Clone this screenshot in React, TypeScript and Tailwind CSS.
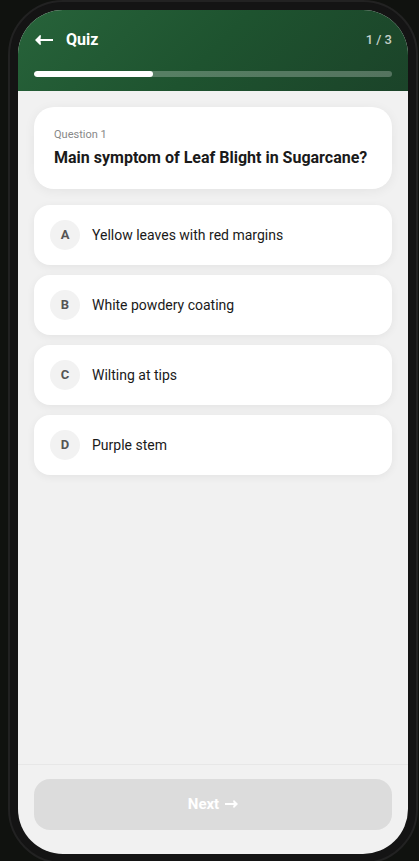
import { useState } from "react";
import { clsx } from "clsx";

interface Question {
  text: string;
  options: string[];
}

const questions: Question[] = [
  {
    text: "Main symptom of Leaf Blight in Sugarcane?",
    options: [
      "Yellow leaves with red margins",
      "White powdery coating",
      "Wilting at tips",
      "Purple stem"
    ]
  }
];

const TOTAL = 3;
const LETTERS = ["A", "B", "C", "D"];

/** Long thin arrow with a filled head */
function BackArrow() {
  return (
    <svg width="18" height="12" viewBox="0 0 18 12" fill="none" aria-hidden="true">
      <path d="M3 6H18" stroke="currentColor" strokeWidth="2" />
      <path d="M0 6L5 1L6 1.6L5.4 6L6 10.4L5 11Z" fill="currentColor" />
    </svg>
  );
}

function NextArrow() {
  return (
    <svg width="13" height="12" viewBox="0 0 13 12" fill="none" aria-hidden="true">
      <path d="M0 5H11" stroke="currentColor" strokeWidth="2" />
      <path d="M13 5L9 1L8 2L9.2 5L8 8L9 9Z" fill="currentColor" />
    </svg>
  );
}

function QuizHeader({ current }: { current: number }) {
  return (
    <header className="bg-linear-135 from-[#27633a] via-[#1e532f] to-[#1b4329] px-4 pt-4 pb-[14px] text-white">
      <div className="flex h-7 items-center">
        <button type="button" aria-label="Back" className="flex w-5 justify-center">
          <BackArrow />
        </button>
        <h1 className="ml-3 text-base font-bold">Quiz</h1>
        <span className="ml-auto text-[13px] font-medium text-white/75">
          {current} / {TOTAL}
        </span>
      </div>
      <div className="mt-[17px] h-1.5 overflow-hidden rounded-full bg-white/25">
        <div
          className="h-full rounded-full bg-white"
          style={{ width: `${(current / TOTAL) * 100}%` }}
        />
      </div>
    </header>
  );
}

interface OptionButtonProps {
  letter: string;
  label: string;
  selected: boolean;
  onSelect: () => void;
}

function OptionButton({ letter, label, selected, onSelect }: OptionButtonProps) {
  return (
    <button
      type="button"
      onClick={onSelect}
      aria-pressed={selected}
      className={clsx(
        "flex w-full items-center gap-3 rounded-2xl px-4 py-[15px] text-left shadow-[0_2px_8px_rgba(0,0,0,0.06)]",
        selected ? "bg-green-50" : "bg-white"
      )}
    >
      <span className="flex size-[30px] shrink-0 items-center justify-center rounded-full bg-[#f2f2f2] text-[13px] font-bold text-[#555555]">
        {letter}
      </span>
      <span className="text-sm text-[#1a1a1a]">{label}</span>
    </button>
  );
}

export default function App() {
  const [selected, setSelected] = useState<number | null>(null);
  const question = questions[0];

  return (
    <div className="h-screen overflow-hidden bg-[#10120f] pr-px pl-2 font-[Roboto,sans-serif]">
      {/* Phone frame */}
      <div className="h-[calc(100%+3px)] rounded-[55px] border-2 border-[#222222] bg-[#141414] p-2">
        <div className="flex h-full flex-col overflow-hidden rounded-[45px] bg-[#f1f1f1]">
          <QuizHeader current={1} />

          <main className="flex-1 overflow-hidden p-4">
            <section className="rounded-[20px] bg-white p-5 shadow-[0_2px_12px_rgba(0,0,0,0.06)]">
              <p className="text-[11px] leading-4 text-[#888888]">Question 1</p>
              <h2 className="mt-1 text-base leading-[22px] font-bold text-[#1a1a1a]">
                {question.text}
              </h2>
            </section>

            <div className="mt-4 flex flex-col gap-2.5">
              {question.options.map((option, i) => (
                <OptionButton
                  key={option}
                  letter={LETTERS[i]}
                  label={option}
                  selected={selected === i}
                  onSelect={() => setSelected(i)}
                />
              ))}
            </div>
          </main>

          <footer className="border-t border-[#e7e7e7] px-4 pt-[14px] pb-6">
            <button
              type="button"
              disabled={selected === null}
              className="flex w-full items-center justify-center gap-1.5 rounded-2xl bg-green-800 py-[15px] text-[15px] leading-[21px] font-bold text-white disabled:bg-[#dcdcdc]"
            >
              Next
              <NextArrow />
            </button>
          </footer>
        </div>
      </div>
    </div>
  );
}
